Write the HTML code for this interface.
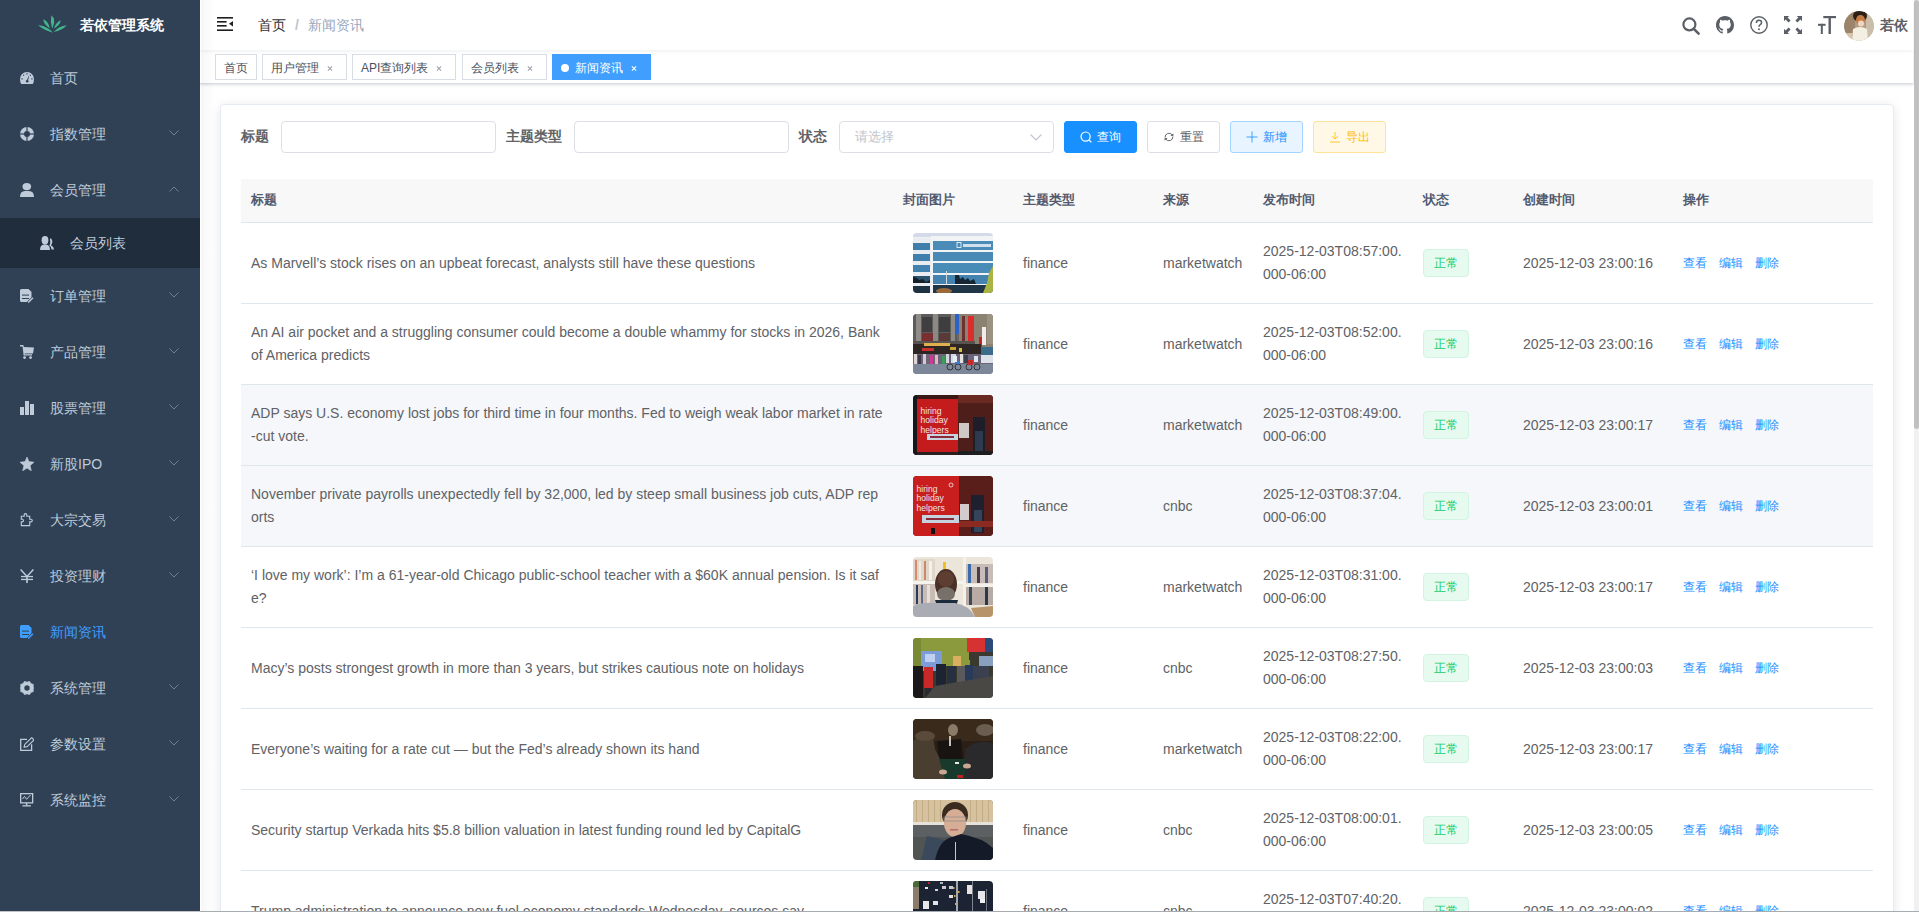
<!DOCTYPE html>
<html><head><meta charset="utf-8">
<style>
*{box-sizing:border-box;margin:0;padding:0}
html,body{width:1919px;height:912px;overflow:hidden;background:#fff;font-family:"Liberation Sans",sans-serif;font-size:14px;color:#606266}
.sidebar{position:absolute;left:0;top:0;width:200px;height:911px;background:#304156;z-index:5}
.sshadow{position:absolute;left:201px;top:0;width:14px;height:912px;background:linear-gradient(to right,rgba(0,0,0,.035),rgba(0,0,0,.02) 40%,rgba(0,0,0,0));z-index:6}
.logo{position:absolute;left:0;top:0;width:200px;height:50px}
.logo .t{position:absolute;left:80px;top:0;line-height:50px;color:#fff;font-weight:bold;font-size:14px}
.menu{position:absolute;left:0;top:50px;width:200px}
.mi{position:relative;height:56px;line-height:56px;color:#bfcbd9;padding-left:50px;font-size:14px}
.mi svg.ic{position:absolute;left:20px;top:21px;width:14px;height:14px;fill:#bfcbd9}
.mi .arr{position:absolute;left:169px;top:24px;width:10px;height:6px}
.mi.sub{height:50px;line-height:50px;background:#1f2d3d;padding-left:70px}
.mi.sub svg.ic{left:40px;top:18px}
.mi.active{color:#409eff}
.mi.active svg.ic{fill:#409eff}
.navbar{position:absolute;left:200px;top:0;width:1713px;height:50px;background:#fff;box-shadow:0 1px 4px rgba(0,21,41,.08);z-index:3}
.tags{position:absolute;left:200px;top:50px;width:1713px;height:34px;background:#fff;border-bottom:1px solid #d8dce5;box-shadow:0 1px 3px 0 rgba(0,0,0,.12),0 0 3px 0 rgba(0,0,0,.04);z-index:2}
.tag{position:absolute;top:4px;height:26px;line-height:26px;overflow:hidden;border:1px solid #d8dce5;color:#495060;background:#fff;font-size:12px;padding:0 8px;white-space:nowrap}
.tag .x{display:inline-block;margin-left:5px;color:#495060;font-size:12px}
.tag.act{background:#409eff;border-color:#409eff;color:#fff}
.bc{position:absolute;left:58px;top:0;line-height:50px;font-size:14px}
.bc .sep{margin:0 9px;color:#c0c4cc;font-weight:bold}
.nic{position:absolute;top:16px;width:18px;height:18px}
.avatar{position:absolute;left:1644px;top:11px;width:30px;height:30px;border-radius:50%;overflow:hidden}
.uname{position:absolute;left:1680px;top:0;line-height:50px;font-size:14px;font-weight:bold;color:#5a5e66}
.tag .x{display:inline-block;position:relative;width:16px;height:16px;vertical-align:-3px;margin-left:3px}
.tag .x:before,.tag .x:after{content:"";position:absolute;left:5px;top:8.5px;width:6px;height:1px;background:#9ea3ab;transform:rotate(45deg)}
.tag .x:after{transform:rotate(-45deg)}
.tag.act .x:before,.tag.act .x:after{background:#fff}
.tag .dot{display:inline-block;width:8px;height:8px;border-radius:50%;background:#fff;margin-right:6px;vertical-align:0px}
.main{position:absolute;left:200px;top:84px;width:1713px;height:828px;background:#fff}
.card{position:absolute;left:20px;top:20px;width:1674px;height:900px;border:1px solid #e6ebf5;border-radius:4px;background:#fff;box-shadow:0 2px 12px 0 rgba(0,0,0,.1)}
.fl{position:absolute;top:15px;line-height:32px;font-size:14px;font-weight:bold;color:#606266}
.inp{position:absolute;top:16px;width:215px;height:32px;border:1px solid #dcdfe6;border-radius:4px;background:#fff}
.sel .ph{position:absolute;left:15px;top:0;line-height:30px;font-size:13px;color:#c0c4cc}
.sel .chev{position:absolute;left:190px;top:12px;width:12px;height:7px}
.btn{position:absolute;top:16px;width:73px;height:32px;border:1px solid #dcdfe6;border-radius:3px;font-size:12px;line-height:30px;padding-left:15px;white-space:nowrap}
.btn .bi{width:12px;height:12px;vertical-align:-2px;margin-right:5px}
.btn.pri{background:#1890ff;border-color:#1890ff;color:#fff}
.btn.def{background:#fff;color:#606266}
.btn.pl{background:#e8f4ff;border-color:#a3d3ff;color:#1890ff}
.btn.wa{background:#fff8e6;border-color:#ffe399;color:#ffba00}
.tbl{position:absolute;border-collapse:collapse;table-layout:fixed;width:1632px}
.tbl th .cell{position:relative;top:-1px}
.tbl th{height:43px;background:#f8f8f9;color:#515a6e;font-size:13px;font-weight:bold;text-align:left;border-bottom:1px solid #dfe6ec;padding:0}
.tbl td{height:81px;border-bottom:1px solid #dfe6ec;padding:0;font-size:14px;color:#606266}
.tbl .cell{padding:0 10px;line-height:23px;word-break:break-all}
.tbl td .cell.s1{position:relative;top:1px}
.tbl tr.hov td{background:#f5f7fa}
.tbl td.c .img{display:block;width:80px;height:60px;margin:0 auto}
.ok{display:inline-block;height:28px;line-height:26px;padding:0 10px;font-size:12px;color:#13ce66;background:#e7faf0;border:1px solid #d0f5e0;border-radius:4px;vertical-align:middle}
.op{padding-left:11px}.op a{color:#1890ff;font-size:12px;margin-right:12px}
.scroll{position:absolute;left:1913px;top:0;width:6px;height:912px;background:#f1f1f1}
.scroll:before{content:"";position:absolute;left:0;top:0;width:1px;height:912px;background:#fff}
.thumb{position:absolute;left:1914px;top:0;width:5px;height:429px;background:#c1c1c1;border-radius:3px}
.bottomline{position:absolute;left:0;top:911px;width:1919px;height:1px;background:linear-gradient(to right,#bfc3c6 0,#bfc3c6 200px,#a7acb1 200px);z-index:9}
</style></head><body>
<div class="sidebar">
  <div class="logo"><svg style="position:absolute;left:34px;top:10px" width="38" height="28" viewBox="34 10 38 28"><g fill="#44b68c">
<path d="M52.2,28.8 Q50,22 51.3,15.2 Q56.5,19 52.2,28.8Z"/>
<path d="M49.8,28.5 Q43.6,24 43.2,19.2 Q48.4,21 49.8,28.5Z"/>
<path d="M54,28.5 Q56,22 60.8,20.3 Q60,25 54,28.5Z"/>
<path d="M53,32.8 Q44,30 38,25.2 Q46,25 53,32.8Z"/>
<path d="M53.6,32 Q59,26 66.8,25.2 Q62,30.5 53.6,32Z"/>
</g></svg><span class="t">若依管理系统</span></div>
  <div class="menu">
    <div class="mi"><svg class="ic" viewBox="0 0 14 14" style="top:21px"><path d="M1.2,13 L12.8,13 Q14,11 14,8 A7,7 0 0 0 0,8 Q0,11 1.2,13Z" fill="#bfcbd9"/><g fill="#304156"><rect x="6.2" y="2.4" width="1.6" height="1"/><rect x="3.2" y="3.6" width="1" height="1.4"/><rect x="9.8" y="3.6" width="1" height="1.4"/><rect x="1.3" y="7.4" width="1.5" height="1"/><rect x="11.2" y="7.4" width="1.5" height="1"/><circle cx="7.2" cy="10.2" r="1.3"/><path d="M6.6,10 L8.6,5 L9,5.2 L7.8,10.4Z"/></g></svg>首页</div>
    <div class="mi"><svg class="ic" viewBox="0 0 14 14"><circle cx="7" cy="7" r="5" fill="none" stroke="#bfcbd9" stroke-width="4"/><rect x="6.3" y="0" width="1.4" height="14" fill="#304156" opacity=".85"/><rect x="0" y="6.3" width="14" height="1.4" fill="#304156" opacity=".85"/></svg>指数管理<svg class="arr" viewBox="0 0 10 6"><path d="M0.5,0.5 L5,5 L9.5,0.5" fill="none" stroke="#76818f" stroke-width="1"/></svg></div>
    <div class="mi"><svg class="ic" viewBox="0 0 14 14"><ellipse cx="6.8" cy="3.6" rx="4.3" ry="3.6" fill="#bfcbd9"/><path d="M0,14 Q0,8 5,8 L9,8 Q14,8 14,14Z" fill="#bfcbd9"/></svg>会员管理<svg class="arr" viewBox="0 0 10 6"><path d="M0.5,5.5 L5,1 L9.5,5.5" fill="none" stroke="#76818f" stroke-width="1"/></svg></div>
    <div class="mi sub"><svg class="ic" viewBox="0 0 14 14"><ellipse cx="5" cy="4.2" rx="3.4" ry="4.2" fill="#bfcbd9"/><path d="M0,14 Q0,9 4,8.6 L6,8.6 Q10,9 10,14Z" fill="#bfcbd9"/><path d="M10,2.2 Q12.8,3 12.2,7 L11,9.2 Q14,10.8 14,13.5 L11.6,13.5 Q11.2,10.6 9.4,9.6 Q10.8,7 10,2.2Z" fill="#bfcbd9"/></svg>会员列表</div>
    <div class="mi"><svg class="ic" viewBox="0 0 14 14"><path d="M1.5,0 H9 L11.5,2.5 V8.5 L8,12 L7.5,13 H1.5 Q0,13 0,11.5 V1.5 Q0,0 1.5,0Z" fill="#bfcbd9"/><path d="M8.6,0 L11.6,3 L11.6,0Z" fill="#304156"/><rect x="2" y="5.6" width="7" height="1" fill="#304156"/><rect x="2" y="9" width="7" height="1" fill="#304156"/><path d="M7.4,12.6 L12.6,7.6 L14,9 L8.8,14 L7.4,14Z" fill="#304156"/><path d="M8.2,13.6 L13,8.8" stroke="#bfcbd9" stroke-width="1.4"/></svg>订单管理<svg class="arr" viewBox="0 0 10 6"><path d="M0.5,0.5 L5,5 L9.5,0.5" fill="none" stroke="#76818f" stroke-width="1"/></svg></div>
    <div class="mi"><svg class="ic" viewBox="0 0 14 14"><path d="M0,0 H3.2 L4,2 L14,2.6 L13,8.4 L4.6,8.4 L4.7,9.2 L12,9.2 L12,10.4 L3.6,10.4 L2.6,1.6 L0,1.6Z" fill="#bfcbd9"/><circle cx="4.6" cy="12.6" r="1.4" fill="#bfcbd9"/><circle cx="10.6" cy="12.6" r="1.4" fill="#bfcbd9"/></svg>产品管理<svg class="arr" viewBox="0 0 10 6"><path d="M0.5,0.5 L5,5 L9.5,0.5" fill="none" stroke="#76818f" stroke-width="1"/></svg></div>
    <div class="mi"><svg class="ic" viewBox="0 0 14 14"><rect x="0" y="6" width="4" height="8" fill="#bfcbd9"/><rect x="5" y="0" width="4" height="14" fill="#bfcbd9"/><rect x="10" y="3" width="4" height="11" fill="#bfcbd9"/></svg>股票管理<svg class="arr" viewBox="0 0 10 6"><path d="M0.5,0.5 L5,5 L9.5,0.5" fill="none" stroke="#76818f" stroke-width="1"/></svg></div>
    <div class="mi"><svg class="ic" viewBox="0 0 14 14"><path d="M7,0 L8.9,4.6 L14,5.2 L10.1,8.6 L11.3,13.8 L7,11.1 L2.7,13.8 L3.9,8.6 L0,5.2 L5.1,4.6Z" fill="#bfcbd9" stroke="#bfcbd9" stroke-width=".6" stroke-linejoin="round"/></svg>新股IPO<svg class="arr" viewBox="0 0 10 6"><path d="M0.5,0.5 L5,5 L9.5,0.5" fill="none" stroke="#76818f" stroke-width="1"/></svg></div>
    <div class="mi"><svg class="ic" viewBox="0 0 14 14"><path d="M1.3,3.3 H4.2 V2 Q4.2,0.6 5.5,0.6 Q6.8,0.6 6.8,2 V3.3 H9.7 V6.3 H10.9 Q12.3,6.3 12.3,7.6 Q12.3,8.9 10.9,8.9 H9.7 V12.6 H1.3 V8.9 H2.5 Q3.5,8.6 3.5,7.6 Q3.5,6.6 2.5,6.3 H1.3Z" fill="none" stroke="#bfcbd9" stroke-width="1.1"/></svg>大宗交易<svg class="arr" viewBox="0 0 10 6"><path d="M0.5,0.5 L5,5 L9.5,0.5" fill="none" stroke="#76818f" stroke-width="1"/></svg></div>
    <div class="mi"><svg class="ic" viewBox="0 0 14 14"><path d="M0.6,0.6 L7,7.4 L13.4,0.6" fill="none" stroke="#bfcbd9" stroke-width="1.5"/><rect x="1" y="6.9" width="12" height="1.3" fill="#bfcbd9"/><rect x="1" y="9.8" width="12" height="1.3" fill="#bfcbd9"/><rect x="6.2" y="7" width="1.6" height="7" fill="#bfcbd9"/></svg>投资理财<svg class="arr" viewBox="0 0 10 6"><path d="M0.5,0.5 L5,5 L9.5,0.5" fill="none" stroke="#76818f" stroke-width="1"/></svg></div>
    <div class="mi active"><svg class="ic" viewBox="0 0 14 14"><path d="M1.5,0 H9 L11.5,2.5 V8.5 L8,12 L7.5,13 H1.5 Q0,13 0,11.5 V1.5 Q0,0 1.5,0Z" fill="#409eff"/><path d="M8.6,0 L11.6,3 L11.6,0Z" fill="#304156"/><rect x="2" y="5.6" width="7" height="1" fill="#304156"/><rect x="2" y="9" width="7" height="1" fill="#304156"/><path d="M7.4,12.6 L12.6,7.6 L14,9 L8.8,14 L7.4,14Z" fill="#304156"/><path d="M8.2,13.6 L13,8.8" stroke="#409eff" stroke-width="1.4"/></svg>新闻资讯</div>
    <div class="mi"><svg class="ic" viewBox="0 0 14 14"><path d="M4.5,0.3 L7,1.2 L9.5,0.3 L10.9,2.5 L13.4,3.4 L13.2,5.9 L14,7 L13.2,8.1 L13.4,10.6 L10.9,11.5 L9.5,13.7 L7,12.8 L4.5,13.7 L3.1,11.5 L0.6,10.6 L0.8,8.1 L0,7 L0.8,5.9 L0.6,3.4 L3.1,2.5Z" fill="#bfcbd9" stroke="#bfcbd9" stroke-width="0.6" stroke-linejoin="round"/><circle cx="7" cy="7" r="2.7" fill="#304156"/></svg>系统管理<svg class="arr" viewBox="0 0 10 6"><path d="M0.5,0.5 L5,5 L9.5,0.5" fill="none" stroke="#76818f" stroke-width="1"/></svg></div>
    <div class="mi"><svg class="ic" viewBox="0 0 14 14"><path d="M7,2.3 H0.7 V13.3 H11.6 V7.3" fill="none" stroke="#bfcbd9" stroke-width="1.3"/><path d="M4,10.3 L4.8,7.3 L11.7,0.6 L14,2.9 L7.2,9.6Z" fill="none" stroke="#bfcbd9" stroke-width="1.1" stroke-linejoin="round"/></svg>参数设置<svg class="arr" viewBox="0 0 10 6"><path d="M0.5,0.5 L5,5 L9.5,0.5" fill="none" stroke="#76818f" stroke-width="1"/></svg></div>
    <div class="mi"><svg class="ic" viewBox="0 0 14 14"><rect x="0.65" y="0.65" width="12" height="9.2" fill="none" stroke="#bfcbd9" stroke-width="1.3"/><rect x="5.9" y="10" width="1.4" height="2.6" fill="#bfcbd9"/><rect x="2.4" y="12.2" width="8.5" height="1.3" fill="#bfcbd9"/><path d="M2.5,6 L4.5,3.4 L6.6,6.3 L10.5,2" fill="none" stroke="#bfcbd9" stroke-width="1"/></svg>系统监控<svg class="arr" viewBox="0 0 10 6"><path d="M0.5,0.5 L5,5 L9.5,0.5" fill="none" stroke="#76818f" stroke-width="1"/></svg></div>
  </div>
</div>
<div class="navbar">
  <svg style="position:absolute;left:17px;top:17px" width="16" height="14" viewBox="0 0 16 14"><g fill="#1f1f1f"><rect x="0" y="0" width="16" height="1.6"/><rect x="0" y="4" width="9.6" height="1.6"/><rect x="0" y="8" width="9.6" height="1.6"/><rect x="0" y="12.4" width="16" height="1.6"/><path d="M16,4 L16,9.6 L12,6.8Z"/></g></svg>
  <div class="bc"><span style="color:#303133">首页</span><span class="sep">/</span><span style="color:#97a8be">新闻资讯</span></div>
  <svg class="nic" style="left:1482px;top:17px" viewBox="0 0 18 18"><circle cx="7.4" cy="7.4" r="6" fill="none" stroke="#5a5e66" stroke-width="2.2"/><path d="M11.8,11.8 L16.6,16.6" stroke="#5a5e66" stroke-width="2.6" stroke-linecap="round"/></svg>
  <svg class="nic" style="left:1516px" viewBox="0 0 16 16"><path fill="#5a5e66" d="M8 0C3.58 0 0 3.58 0 8c0 3.54 2.29 6.53 5.47 7.59.4.07.55-.17.55-.38 0-.19-.01-.82-.01-1.49-2.01.37-2.53-.49-2.69-.94-.09-.23-.48-.94-.82-1.13-.28-.15-.68-.52-.01-.53.63-.01 1.08.58 1.23.82.72 1.21 1.87.87 2.33.66.07-.52.28-.87.51-1.07-1.78-.2-3.64-.89-3.640-3.950 0-.87.31-1.59.82-2.15-.08-.2-.36-1.02.08-2.12 0 0 .67-.21 2.2.82.64-.18 1.32-.27 2-.27.68 0 1.36.09 2 .27 1.53-1.04 2.2-.82 2.2-.82.44 1.1.16 1.92.08 2.12.51.56.82 1.27.82 2.15 0 3.07-1.87 3.75-3.65 3.95.29.25.54.73.54 1.48 0 1.07-.01 1.93-.01 2.2 0 .21.15.46.55.38A8.013 8.013 0 0016 8c0-4.42-3.58-8-8-8z"/></svg>
  <svg class="nic" style="left:1550px" viewBox="0 0 18 18"><circle cx="9" cy="9" r="8.2" fill="none" stroke="#5a5e66" stroke-width="1.4"/><path d="M6.4,7 Q6.4,4.3 9,4.3 Q11.6,4.3 11.6,6.6 Q11.6,8 10,8.8 Q9,9.4 9,10.8" fill="none" stroke="#5a5e66" stroke-width="1.5"/><circle cx="9" cy="13.2" r="0.95" fill="#5a5e66"/></svg>
  <svg class="nic" style="left:1584px" viewBox="0 0 18 18"><g fill="#5a5e66"><path d="M0,0 H5.2 L3.6,1.6 L6.6,4.6 L4.6,6.6 L1.6,3.6 L0,5.2Z"/><path d="M18,0 V5.2 L16.4,3.6 L13.4,6.6 L11.4,4.6 L14.4,1.6 L12.8,0Z"/><path d="M0,18 V12.8 L1.6,14.4 L4.6,11.4 L6.6,13.4 L3.6,16.4 L5.2,18Z"/><path d="M18,18 H12.8 L14.4,16.4 L11.4,13.4 L13.4,11.4 L16.4,14.4 L18,12.8Z"/></g></svg>
  <svg class="nic" style="left:1618px" viewBox="0 0 18 18"><g fill="#5a5e66"><rect x="5.3" y="0" width="12.7" height="2.2"/><rect x="10.5" y="0" width="2.4" height="18"/><rect x="0" y="7.8" width="7.6" height="2"/><rect x="2.8" y="7.8" width="2" height="10.2"/></g></svg>
  <div class="avatar"><svg viewBox="0 0 30 30" width="30" height="30"><defs><clipPath id="av"><circle cx="15" cy="15" r="15"/></clipPath></defs><g clip-path="url(#av)">
<rect width="30" height="30" fill="#b49c80"/><rect x="0" y="0" width="11" height="22" fill="#9c846c"/><rect x="22" y="4" width="8" height="22" fill="#cabeaa"/>
<ellipse cx="16" cy="5" rx="7" ry="6" fill="#2a2018"/><ellipse cx="16.5" cy="9" rx="4.5" ry="5" fill="#c87a42"/><ellipse cx="17" cy="12.5" rx="3" ry="3" fill="#eed6c6"/>
<path d="M8,30 L9,18 Q16,14 23,18 L24,30Z" fill="#f3efe3"/><rect x="0" y="22" width="8" height="8" fill="#d4c4ac"/></g></svg></div>
  <div class="uname">若依</div>
</div>
<div class="tags">
  <div class="tag" style="left:15px">首页</div>
  <div class="tag" style="left:62px">用户管理<i class="x"></i></div>
  <div class="tag" style="left:152px">API查询列表<i class="x"></i></div>
  <div class="tag" style="left:262px">会员列表<i class="x"></i></div>
  <div class="tag act" style="left:352px"><i class="dot"></i>新闻资讯<i class="x"></i></div>
</div>
<div class="main"><div class="card">
  <div class="fl" style="left:20px">标题</div><div class="inp" style="left:60px"></div>
  <div class="fl" style="left:285px">主题类型</div><div class="inp" style="left:353px"></div>
  <div class="fl" style="left:578px">状态</div><div class="inp sel" style="left:618px"><span class="ph">请选择</span><svg class="chev" viewBox="0 0 12 7"><path d="M0.5,0.5 L6,6 L11.5,0.5" fill="none" stroke="#c0c4cc" stroke-width="1.1"/></svg></div>
  <div class="btn pri" style="left:843px"><svg viewBox="0 0 12 12" class="bi"><circle cx="5.6" cy="5.6" r="4.6" fill="none" stroke="#fff" stroke-width="1.2"/><path d="M9,9 L11.4,11.4" stroke="#fff" stroke-width="1.2"/></svg>查询</div>
  <div class="btn def" style="left:926px"><svg viewBox="0 0 12 12" class="bi"><path d="M2.1,6.2 A3.9,3.9 0 0 1 9.2,3.9" fill="none" stroke="#606266" stroke-width=".95"/><path d="M10.6,2.4 L10.2,5.4 L7.4,4.4Z" fill="#606266"/><path d="M9.9,5.8 A3.9,3.9 0 0 1 2.8,8.1" fill="none" stroke="#606266" stroke-width=".95"/><path d="M1.4,9.6 L1.8,6.6 L4.6,7.6Z" fill="#606266"/></svg>重置</div>
  <div class="btn pl" style="left:1009px"><svg viewBox="0 0 12 12" class="bi"><path d="M6,0.5 V11.5 M0.5,6 H11.5" stroke="#1890ff" stroke-width=".8"/></svg>新增</div>
  <div class="btn wa" style="left:1092px"><svg viewBox="0 0 12 12" class="bi"><path d="M6,1 V8 M3,5 L6,8 L9,5 M1,11 H11" fill="none" stroke="#ffba00" stroke-width=".8"/></svg>导出</div>
  <table class="tbl" style="left:20px;top:74px">
    <colgroup><col style="width:652px"><col style="width:120px"><col style="width:140px"><col style="width:100px"><col style="width:160px"><col style="width:100px"><col style="width:160px"><col style="width:200px"></colgroup>
    <thead><tr><th><div class="cell">标题</div></th><th><div class="cell">封面图片</div></th><th><div class="cell">主题类型</div></th><th><div class="cell">来源</div></th><th><div class="cell">发布时间</div></th><th><div class="cell">状态</div></th><th><div class="cell">创建时间</div></th><th><div class="cell">操作</div></th></tr></thead>
    <tbody>
<tr><td><div class="cell s1">As Marvell’s stock rises on an upbeat forecast, analysts still have these questions</div></td><td class="c"><svg class="img" viewBox="0 0 80 60" width="80" height="60"><defs><clipPath id="cp0"><rect width="80" height="60" rx="4"/></clipPath></defs><g clip-path="url(#cp0)"><rect width="80" height="60" fill="#eef0f4"/><rect width="80" height="4" fill="#d5dae8"/>
<rect x="0" y="5" width="18" height="55" fill="#e9ecf0"/>
<rect x="0" y="10" width="17" height="7" fill="#3f7dab"/><rect x="0" y="21" width="17" height="7" fill="#4080ad"/><rect x="0" y="32" width="17" height="7" fill="#4282ae"/><rect x="0" y="43" width="17" height="7" fill="#2c5470"/><rect x="0" y="53" width="17" height="7" fill="#1e3242"/>
<path d="M0,50 L0,44 L4,45 L6,47 L10,46 L13,49 L17,47 L17,50Z" fill="#14202a"/>
<rect x="18" y="3" width="62" height="57" fill="#f2f3f5"/>
<rect x="20" y="8" width="60" height="9" fill="#4a8bb8"/><rect x="20" y="19" width="60" height="9" fill="#4889b6"/><rect x="20" y="30" width="60" height="10" fill="#4a8cb8"/><rect x="20" y="42" width="60" height="9" fill="#4483b0"/>
<path d="M42,51 L42,42 L46,42 L47,46 L50,44 L52,47 L55,45 L57,48 L61,46 L63,51Z" fill="#172634"/>
<rect x="20" y="52" width="60" height="8" fill="#203646"/>
<ellipse cx="31" cy="58" rx="8" ry="3" fill="#9a6a3a"/>
<path d="M80,33 L76,40 L74,50 L70,60 L80,60Z" fill="#a9b443"/>
<rect x="44" y="9.5" width="4" height="5" fill="none" stroke="#fff" stroke-width=".8"/><rect x="50" y="11" width="28" height="3" fill="#e8eef5" opacity=".85"/>
<rect x="33" y="38" width="1" height="14" fill="#d0d8e0"/></g></svg></td><td><div class="cell s1">finance</div></td><td><div class="cell s1">marketwatch</div></td><td><div class="cell">2025-12-03T08:57:00.000-06:00</div></td><td><div class="cell"><span class="ok">正常</span></div></td><td><div class="cell s1">2025-12-03 23:00:16</div></td><td><div class="cell op"><a>查看</a><a>编辑</a><a>删除</a></div></td></tr>
<tr><td><div class="cell">An AI air pocket and a struggling consumer could become a double whammy for stocks in 2026, Bank of America predicts</div></td><td class="c"><svg class="img" viewBox="0 0 80 60" width="80" height="60"><defs><clipPath id="cp1"><rect width="80" height="60" rx="4"/></clipPath></defs><g clip-path="url(#cp1)"><rect width="80" height="60" fill="#6e6864"/>
<rect x="0" y="0" width="44" height="28" fill="#5e5c5a"/>
<rect x="3" y="0" width="5" height="27" fill="#908c88"/><rect x="20" y="0" width="5" height="27" fill="#8c8883"/><rect x="38" y="0" width="4" height="27" fill="#8e8a86"/>
<rect x="9" y="3" width="10" height="15" fill="#403e40"/><rect x="26" y="3" width="11" height="15" fill="#3e3d3f"/>
<rect x="9" y="19" width="11" height="8" fill="#7a3030"/><rect x="26" y="19" width="11" height="8" fill="#5a3a36"/>
<rect x="46" y="0" width="34" height="33" fill="#8c8272"/>
<rect x="42" y="0" width="4" height="20" fill="#2d62c8"/>
<rect x="49" y="2" width="3" height="27" fill="#6e3030"/>
<rect x="55" y="2" width="6" height="27" fill="#dc2c2c"/>
<rect x="69" y="13" width="4" height="18" fill="#f2ecec"/><rect x="66" y="23" width="3" height="10" fill="#c42424"/>
<rect x="74" y="0" width="6" height="30" fill="#9c9282"/>
<rect x="0" y="27" width="62" height="3" fill="#58534f"/>
<rect x="0" y="30" width="68" height="11" fill="#2e2622"/>
<rect x="11" y="29" width="26" height="3" fill="#e0b050"/><rect x="9" y="34" width="12" height="3" fill="#c83030"/><rect x="37" y="33" width="6" height="3" fill="#c8a030"/><rect x="46" y="34" width="3" height="4" fill="#d0c040"/>
<rect x="0" y="40" width="80" height="11" fill="#6c6478"/>
<rect x="1" y="40" width="3" height="10" fill="#e0d4d4"/><rect x="5" y="41" width="3" height="9" fill="#3a3a4a"/><rect x="10" y="40" width="3" height="10" fill="#d8c8d0"/><rect x="17" y="41" width="3" height="9" fill="#cc3c8c"/><rect x="22" y="41" width="3" height="9" fill="#e8b4c4"/><rect x="29" y="42" width="3" height="8" fill="#3c9c5c"/><rect x="33" y="40" width="3" height="9" fill="#d4d4dc"/><rect x="38" y="40" width="5" height="9" fill="#d2dae8"/><rect x="47" y="40" width="3" height="9" fill="#e4e0e0"/><rect x="51" y="41" width="4" height="8" fill="#3a4050"/>
<rect x="0" y="50" width="80" height="10" fill="#7c879a"/>
<rect x="68" y="33" width="12" height="16" fill="#dce2e8"/><rect x="68" y="33" width="12" height="8" fill="#3c6c8c"/>
<circle cx="37" cy="53" r="3" fill="none" stroke="#222" stroke-width=".8"/><circle cx="45" cy="53" r="3" fill="none" stroke="#222" stroke-width=".8"/><rect x="42" y="47" width="5" height="3" fill="#3a7ad0"/><rect x="40" y="42" width="4" height="6" fill="#e8ecf4"/>
<circle cx="56" cy="53" r="3" fill="none" stroke="#222" stroke-width=".8"/><circle cx="64" cy="53" r="3" fill="none" stroke="#222" stroke-width=".8"/><rect x="55" y="46" width="5" height="5" fill="#c82a2a"/><rect x="61" y="42" width="4" height="6" fill="#dce4f0"/></g></svg></td><td><div class="cell s1">finance</div></td><td><div class="cell s1">marketwatch</div></td><td><div class="cell">2025-12-03T08:52:00.000-06:00</div></td><td><div class="cell"><span class="ok">正常</span></div></td><td><div class="cell s1">2025-12-03 23:00:16</div></td><td><div class="cell op"><a>查看</a><a>编辑</a><a>删除</a></div></td></tr>
<tr class="hov"><td><div class="cell">ADP says U.S. economy lost jobs for third time in four months. Fed to weigh weak labor market in rate-cut vote.</div></td><td class="c"><svg class="img" viewBox="0 0 80 60" width="80" height="60"><defs><clipPath id="cp2"><rect width="80" height="60" rx="4"/></clipPath></defs><g clip-path="url(#cp2)"><rect width="80" height="60" fill="#3a1816"/>
<rect x="0" y="0" width="4" height="60" fill="#16171b"/>
<rect x="4" y="4" width="41" height="56" fill="#c41c1c"/><g font-family="Liberation Sans" font-size="8.6" fill="#eee4ea"><text x="7.5" y="18.5">hiring</text><text x="7.5" y="28.1">holiday</text><text x="7.5" y="37.7">helpers</text></g>
<rect x="14" y="39" width="31" height="6" fill="#c8d4e0"/><rect x="17" y="41" width="24" height="2" fill="#8a2a3a"/>
<rect x="45" y="0" width="35" height="60" fill="#4e1e1a"/><rect x="45" y="0" width="35" height="8" fill="#6a2a22"/>
<rect x="60" y="22" width="12" height="34" fill="#1e1e2a"/><rect x="62" y="36" width="8" height="20" fill="#2e3a4e"/>
<rect x="46" y="28" width="10" height="15" fill="#cfc6c6"/>
<rect x="45" y="56" width="35" height="4" fill="#1e1e20"/><rect x="4" y="57" width="41" height="3" fill="#2a2020"/></g></svg></td><td><div class="cell s1">finance</div></td><td><div class="cell s1">marketwatch</div></td><td><div class="cell">2025-12-03T08:49:00.000-06:00</div></td><td><div class="cell"><span class="ok">正常</span></div></td><td><div class="cell s1">2025-12-03 23:00:17</div></td><td><div class="cell op"><a>查看</a><a>编辑</a><a>删除</a></div></td></tr>
<tr class="hov"><td><div class="cell">November private payrolls unexpectedly fell by 32,000, led by steep small business job cuts, ADP reports</div></td><td class="c"><svg class="img" viewBox="0 0 80 60" width="80" height="60"><defs><clipPath id="cp3"><rect width="80" height="60" rx="4"/></clipPath></defs><g clip-path="url(#cp3)"><rect width="80" height="60" fill="#3e1a16"/>
<rect x="0" y="0" width="46" height="60" fill="#c81e1e"/><g font-family="Liberation Sans" font-size="8.6" fill="#eee4ea"><text x="3.5" y="15.5">hiring</text><text x="3.5" y="25.1">holiday</text><text x="3.5" y="34.7">helpers</text></g>
<rect x="9" y="39" width="37" height="8" fill="#c6d2de"/><rect x="13" y="42" width="28" height="2" fill="#8a2a3a"/>
<circle cx="38" cy="9" r="2" fill="none" stroke="#f0e8ee" stroke-width=".8"/>
<rect x="46" y="0" width="34" height="60" fill="#5a1e1a"/>
<rect x="58" y="19" width="13" height="38" fill="#1e2030"/><rect x="61" y="34" width="8" height="22" fill="#34445a"/>
<rect x="47" y="28" width="9" height="16" fill="#d2cccc"/>
<rect x="46" y="45" width="34" height="6" fill="#8a2a20"/>
<rect x="18" y="52" width="4" height="6" fill="#111"/></g></svg></td><td><div class="cell s1">finance</div></td><td><div class="cell s1">cnbc</div></td><td><div class="cell">2025-12-03T08:37:04.000-06:00</div></td><td><div class="cell"><span class="ok">正常</span></div></td><td><div class="cell s1">2025-12-03 23:00:01</div></td><td><div class="cell op"><a>查看</a><a>编辑</a><a>删除</a></div></td></tr>
<tr><td><div class="cell">‘I love my work’: I’m a 61-year-old Chicago public-school teacher with a $60K annual pension. Is it safe?</div></td><td class="c"><svg class="img" viewBox="0 0 80 60" width="80" height="60"><defs><clipPath id="cp4"><rect width="80" height="60" rx="4"/></clipPath></defs><g clip-path="url(#cp4)"><rect width="80" height="60" fill="#ebe5da"/>
<rect x="0" y="2" width="22" height="22" fill="#e0d6ca"/>
<rect x="2" y="3" width="2" height="20" fill="#d88a6a"/><rect x="6" y="4" width="2" height="19" fill="#f0ece4"/><rect x="11" y="4" width="2" height="19" fill="#c88a6a"/><rect x="16" y="4" width="3" height="19" fill="#f4f0ea"/>
<rect x="30" y="5" width="3" height="10" fill="#f0c020"/>
<rect x="0" y="24" width="50" height="3" fill="#f6f2ec"/>
<rect x="0" y="27" width="22" height="21" fill="#c8bcb4"/><rect x="3" y="28" width="2" height="19" fill="#2a3a5a"/><rect x="8" y="28" width="2" height="19" fill="#5a6a8a"/><rect x="14" y="28" width="3" height="19" fill="#e8e0d8"/>
<rect x="50" y="0" width="3" height="60" fill="#f4f0ea"/>
<rect x="53" y="7" width="27" height="19" fill="#c8bcb8"/><rect x="55" y="7" width="3" height="19" fill="#3a6aaa"/><rect x="64" y="10" width="3" height="16" fill="#4a3a4a"/><rect x="72" y="10" width="3" height="16" fill="#5a5a7a"/>
<rect x="53" y="27" width="27" height="3" fill="#f4f0ea"/>
<rect x="53" y="30" width="27" height="18" fill="#b8aaa4"/><rect x="56" y="30" width="3" height="18" fill="#3a4a5a"/><rect x="72" y="30" width="3" height="18" fill="#2a3a4a"/>
<ellipse cx="33" cy="27" rx="11" ry="15" fill="#4a3026"/><ellipse cx="33" cy="22" rx="8" ry="8" fill="#5e3e30"/>
<ellipse cx="33" cy="37" rx="9" ry="7" fill="#77706a"/>
<path d="M22,43 L45,43 L43,50 L24,50Z" fill="#1c2c3c"/>
<path d="M0,49 Q10,45 22,46 L42,46 Q56,48 62,60 L0,60Z" fill="#a9adb3"/>
<path d="M58,51 L80,49 L80,60 L62,60Z" fill="#b8946a"/></g></svg></td><td><div class="cell s1">finance</div></td><td><div class="cell s1">marketwatch</div></td><td><div class="cell">2025-12-03T08:31:00.000-06:00</div></td><td><div class="cell"><span class="ok">正常</span></div></td><td><div class="cell s1">2025-12-03 23:00:17</div></td><td><div class="cell op"><a>查看</a><a>编辑</a><a>删除</a></div></td></tr>
<tr><td><div class="cell s1">Macy’s posts strongest growth in more than 3 years, but strikes cautious note on holidays</div></td><td class="c"><svg class="img" viewBox="0 0 80 60" width="80" height="60"><defs><clipPath id="cp5"><rect width="80" height="60" rx="4"/></clipPath></defs><g clip-path="url(#cp5)"><rect width="80" height="60" fill="#3a3a2c"/>
<rect x="0" y="0" width="57" height="28" fill="#8a9a3c"/>
<rect x="0" y="0" width="8" height="60" fill="#7a8a34"/>
<rect x="54" y="0" width="20" height="14" fill="#d63232"/><rect x="72" y="0" width="8" height="18" fill="#2a4a7a"/>
<rect x="56" y="14" width="24" height="8" fill="#3a3830"/><rect x="66" y="18" width="14" height="10" fill="#8aa0c0"/>
<rect x="8" y="13" width="21" height="20" fill="#7c9cd8"/><rect x="12" y="16" width="10" height="8" fill="#c0d0f0"/>
<rect x="40" y="18" width="8" height="10" fill="#d8b060"/>
<rect x="0" y="28" width="10" height="32" fill="#1a1818"/>
<rect x="11" y="29" width="9" height="21" fill="#c82828"/><rect x="12" y="50" width="6" height="10" fill="#282a34"/>
<rect x="23" y="26" width="10" height="22" fill="#1c2434"/><rect x="25" y="48" width="6" height="12" fill="#2a3448"/>
<rect x="34" y="28" width="9" height="26" fill="#263040"/>
<rect x="44" y="28" width="8" height="20" fill="#5a5a5c"/><rect x="52" y="27" width="8" height="23" fill="#2a3a5a"/><rect x="60" y="28" width="16" height="16" fill="#3a4050"/>
<path d="M12,60 L22,48 L80,38 L80,60Z" fill="#4a4844"/></g></svg></td><td><div class="cell s1">finance</div></td><td><div class="cell s1">cnbc</div></td><td><div class="cell">2025-12-03T08:27:50.000-06:00</div></td><td><div class="cell"><span class="ok">正常</span></div></td><td><div class="cell s1">2025-12-03 23:00:03</div></td><td><div class="cell op"><a>查看</a><a>编辑</a><a>删除</a></div></td></tr>
<tr><td><div class="cell s1">Everyone’s waiting for a rate cut — but the Fed’s already shown its hand</div></td><td class="c"><svg class="img" viewBox="0 0 80 60" width="80" height="60"><defs><clipPath id="cp6"><rect width="80" height="60" rx="4"/></clipPath></defs><g clip-path="url(#cp6)"><rect width="80" height="60" fill="#2c2016"/>
<rect x="0" y="0" width="80" height="22" fill="#3a2a1c"/>
<path d="M24,22 L48,20 L50,40 L26,40Z" fill="#181412"/>
<ellipse cx="40" cy="11" rx="5" ry="6" fill="#8a7a68"/><rect x="36" y="17" width="2" height="10" fill="#c8c0b8"/>
<path d="M0,22 Q8,14 20,18 L22,30 Q30,45 34,60 L0,60Z" fill="#4a3e30"/>
<ellipse cx="12" cy="17" rx="10" ry="5" fill="#5a4a3a"/>
<path d="M52,30 Q65,20 80,24 L80,60 L52,60Z" fill="#2a2a2c"/>
<ellipse cx="72" cy="11" rx="9" ry="6" fill="#6a5e50"/>
<path d="M26,40 L52,40 L52,60 L32,60Z" fill="#183a2c"/>
<ellipse cx="30" cy="53" rx="4" ry="2.5" fill="#c8a890"/><ellipse cx="54" cy="47" rx="4" ry="2.5" fill="#c8a890"/>
<rect x="44" y="56" width="6" height="3" fill="#c02020"/><rect x="42" y="43" width="4" height="2" fill="#e8e8e8"/></g></svg></td><td><div class="cell s1">finance</div></td><td><div class="cell s1">marketwatch</div></td><td><div class="cell">2025-12-03T08:22:00.000-06:00</div></td><td><div class="cell"><span class="ok">正常</span></div></td><td><div class="cell s1">2025-12-03 23:00:17</div></td><td><div class="cell op"><a>查看</a><a>编辑</a><a>删除</a></div></td></tr>
<tr><td><div class="cell s1">Security startup Verkada hits $5.8 billion valuation in latest funding round led by CapitalG</div></td><td class="c"><svg class="img" viewBox="0 0 80 60" width="80" height="60"><defs><clipPath id="cp7"><rect width="80" height="60" rx="4"/></clipPath></defs><g clip-path="url(#cp7)"><rect width="80" height="60" fill="#505452"/>
<rect x="0" y="0" width="80" height="24" fill="#d6c29e"/>
<g fill="#c2ac86"><rect x="3" y="0" width="1" height="24"/><rect x="9" y="0" width="1" height="24"/><rect x="15" y="0" width="1" height="24"/><rect x="21" y="0" width="1" height="24"/><rect x="27" y="0" width="1" height="24"/><rect x="57" y="0" width="1" height="24"/><rect x="63" y="0" width="1" height="24"/><rect x="69" y="0" width="1" height="24"/><rect x="75" y="0" width="1" height="24"/></g>
<rect x="0" y="22" width="80" height="3" fill="#e6e2da"/>
<rect x="0" y="25" width="80" height="12" fill="#5c6062"/>
<path d="M8,60 L14,36 L32,40 L28,60Z" fill="#3a4a5c"/>
<ellipse cx="42" cy="15" rx="13" ry="13" fill="#3a2a20"/>
<ellipse cx="42" cy="23" rx="11" ry="14" fill="#d6ae96"/>
<rect x="31" y="17" width="22" height="4" fill="none" stroke="#8a8a8a" stroke-width=".7"/>
<rect x="37" y="29" width="8" height="1.5" fill="#b86a6a"/>
<path d="M22,60 Q26,42 36,38 L48,34 Q70,38 80,48 L80,60Z" fill="#141a28"/>
<rect x="42" y="42" width="1" height="18" fill="#c8c8c8"/></g></svg></td><td><div class="cell s1">finance</div></td><td><div class="cell s1">cnbc</div></td><td><div class="cell">2025-12-03T08:00:01.000-06:00</div></td><td><div class="cell"><span class="ok">正常</span></div></td><td><div class="cell s1">2025-12-03 23:00:05</div></td><td><div class="cell op"><a>查看</a><a>编辑</a><a>删除</a></div></td></tr>
<tr><td><div class="cell s1">Trump administration to announce new fuel economy standards Wednesday, sources say</div></td><td class="c"><svg class="img" viewBox="0 0 80 60" width="80" height="60"><defs><clipPath id="cp8"><rect width="80" height="60" rx="4"/></clipPath></defs><g clip-path="url(#cp8)"><rect width="80" height="60" fill="#1c2434"/>
<rect x="0" y="0" width="6" height="28" fill="#8c7c6a"/><rect x="0" y="0" width="6" height="6" fill="#4a6a3a"/>
<rect x="43" y="0" width="2" height="60" fill="#a0a8b2"/><rect x="59" y="0" width="1" height="60" fill="#7c848e"/><rect x="73" y="8" width="1" height="52" fill="#6c747e"/>
<rect x="54" y="4" width="5" height="9" fill="#eae2e2"/><rect x="65" y="10" width="7" height="8" fill="#e8e8ec"/><rect x="67" y="18" width="5" height="4" fill="#f0f0f0"/>
<rect x="10" y="20" width="6" height="8" fill="#e8e8e8"/><rect x="20" y="20" width="5" height="4" fill="#e0e4e8"/>
<rect x="29" y="5" width="4" height="3" fill="#c8ccd0"/><rect x="36" y="5" width="4" height="3" fill="#c8ccd0"/><rect x="36" y="14" width="4" height="3" fill="#e0e0e0"/><rect x="22" y="8" width="3" height="2" fill="#d0d4d8"/><rect x="12" y="6" width="3" height="2" fill="#e8e8e8"/>
<g fill="#d8a850"><rect x="40" y="6" width="1.5" height="2"/><rect x="41" y="14" width="1.5" height="2"/><rect x="42" y="22" width="1.5" height="2"/><rect x="45" y="10" width="1.5" height="2"/></g>
<rect x="15" y="1" width="2" height="2" fill="#c02020"/><rect x="27" y="1" width="3" height="2" fill="#b0b4c0"/></g></svg></td><td><div class="cell s1">finance</div></td><td><div class="cell s1">cnbc</div></td><td><div class="cell">2025-12-03T07:40:20.000-06:00</div></td><td><div class="cell"><span class="ok">正常</span></div></td><td><div class="cell s1">2025-12-03 23:00:02</div></td><td><div class="cell op"><a>查看</a><a>编辑</a><a>删除</a></div></td></tr>
    </tbody>
  </table>
</div></div>
<div class="sshadow"></div><div class="scroll"></div><div class="thumb"></div>
<div class="bottomline"></div>
</body></html>
